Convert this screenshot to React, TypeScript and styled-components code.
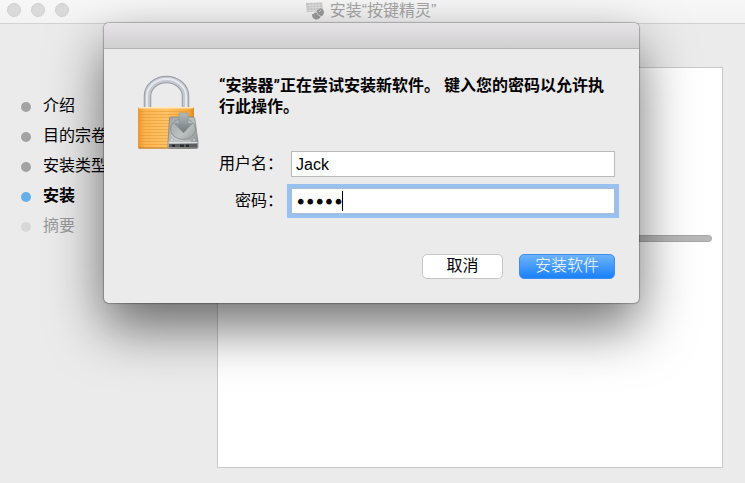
import React, { useState } from "react";
import styled, { createGlobalStyle } from "styled-components";

const GlobalStyle = createGlobalStyle`
  *, *::before, *::after { box-sizing: border-box; }
  body {
    margin: 0;
    background: #ebebeb;
    color: #000;
    font-family: "Liberation Sans", "Noto Sans CJK SC", sans-serif;
    font-size: 16px;
    line-height: 20px;
  }
`;

const Window = styled.div`
  position: relative;
  display: flex;
  flex-direction: column;
  min-height: 100vh;
  overflow: hidden;
`;

const TitleBar = styled.header`
  display: grid;
  grid-template-columns: 1fr auto 1fr;
  align-items: center;
  height: 24px;
  padding: 0 10px 1px 7px;
  background: linear-gradient(#f7f7f7, #f3f3f3);
  border-bottom: 1px solid #d2d2d2;
`;

const Lights = styled.div`
  display: flex;
  gap: 10px;
  padding-bottom: 2px;
`;

const Light = styled.button`
  width: 14px;
  height: 14px;
  padding: 0;
  border: 1px solid #cfcfcf;
  border-radius: 50%;
  background: #dadada;
`;

const Title = styled.h1`
  display: flex;
  align-items: center;
  gap: 6px;
  margin: 0;
  color: #a5a5a5;
  font-size: 16px;
  font-weight: 400;
`;

const Body = styled.div`
  display: flex;
  flex: 1;
  padding: 43px 22px 15px 21px;
`;

const Steps = styled.ol`
  display: flex;
  flex: none;
  flex-direction: column;
  gap: 10px;
  width: 196px;
  margin: 0;
  padding: 29px 0 0;
  list-style: none;
`;

const stepColors = {
  done: { dot: "#a3a3a3", text: "#000" },
  current: { dot: "#65aeea", text: "#000" },
  pending: { dot: "#d8d8d8", text: "#999" },
};

const Step = styled.li<{ $state: keyof typeof stepColors }>`
  display: flex;
  align-items: center;
  gap: 12px;
  height: 20px;
  color: ${(p) => stepColors[p.$state].text};
  font-weight: ${(p) => (p.$state === "current" ? 700 : 400)};

  &::before {
    content: "";
    width: 10px;
    height: 10px;
    margin-top: 2px;
    border-radius: 50%;
    background: ${(p) => stepColors[p.$state].dot};
  }
`;

const Panel = styled.main`
  flex: 1;
  padding: 167px 10px 0;
  border: 1px solid #c9c9c9;
  background: #fff;
`;

const ProgressBar = styled.div`
  height: 7px;
  border: 1px solid #a6a6a6;
  border-radius: 4px;
  background: #b8b8b8;
`;

const SheetLayer = styled.div`
  position: absolute;
  inset: 23px 0 auto;
  display: flex;
  justify-content: center;
  padding-right: 2px;
`;

const Sheet = styled.form`
  width: min(100%, 535px);
  border-radius: 5px;
  background: #ebebeb;
  box-shadow: 0 0 1px 1px rgba(0, 0, 0, 0.25), 0 24px 54px rgba(0, 0, 0, 0.56);
`;

const SheetBar = styled.div`
  height: 26px;
  border-bottom: 1px solid #b4b4b4;
  border-radius: 5px 5px 0 0;
  background: linear-gradient(#e6e3e6, #d0d0d0);
`;

const SheetContent = styled.div`
  display: flex;
  gap: 20px;
  padding: 26px 24px 24px 33px;
`;

const SheetMain = styled.div`
  flex: 1;
`;

const Message = styled.p`
  margin: 0 0 34px;
  font-family: Roboto, "Noto Sans CJK SC", sans-serif;
  font-weight: 700;
  line-height: 21px;
`;

const Fields = styled.div`
  display: grid;
  grid-template-columns: 64px 1fr;
  align-items: center;
  gap: 11px 8px;
`;

const Label = styled.label`
  text-align: right;
  white-space: nowrap;
`;

const FieldBox = styled.div`
  position: relative;
`;

const Field = styled.input`
  display: block;
  width: 100%;
  height: 26px;
  padding: 2px 4px 0;
  border: 1px solid #b9b9b9;
  border-radius: 0;
  outline: none;
  background: #fff;
  color: #000;
  font-family: "Liberation Sans", sans-serif;
  font-size: 16px;
`;

const SecretField = styled(Field)`
  border-color: #a9bdd6;
  box-shadow: 0 0 0 4px #98c1f0;
  font-family: "DejaVu Sans", sans-serif;
  caret-color: transparent;
  -webkit-text-stroke: 1px #000;
`;

const Caret = styled.span`
  position: absolute;
  top: 3px;
  left: 51px;
  width: 1px;
  height: 20px;
  background: #000;
`;

const Actions = styled.div`
  display: flex;
  justify-content: flex-end;
  gap: 16px;
  margin-top: 40px;
`;

const Button = styled.button<{ $primary?: boolean }>`
  width: ${(p) => (p.$primary ? 96 : 81)}px;
  height: 25px;
  padding: 0 0 1px;
  border: 1px solid ${(p) => (p.$primary ? "#3c8ff0" : "#c6c6c6")};
  border-radius: 5px;
  background: ${(p) => (p.$primary ? "linear-gradient(#6cb3fa, #1a80fd)" : "#fff")};
  color: ${(p) => (p.$primary ? "#fff" : "#000")};
  font: inherit;
  font-weight: ${(p) => (p.$primary ? 300 : 400)};
`;

const LockDrawing = styled.svg`
  flex: none;
  width: 62px;
  height: 76px;
`;

function InstallerIcon() {
  return (
    <svg width="18" height="18" viewBox="0 0 18 18" aria-hidden="true">
      <path d="M0 1 16 0.500 17 9 1 10Z" fill="#c6c6c6" />
      <path d="M1 3.500 16 3M1 6 16 5.500M1 8.500 16 8M4 1v9M7 1v9M10 1v9M13 1v9" stroke="#eee" strokeWidth=".6" />
      <path d="M6 12.500 10.500 10 Q11 7 14.500 6.500 Q18 7 18 10.500 Q18 13 15 14.500 Q13 18 9.500 17.500 Q6 16.500 6 12.500Z" fill="#9b9b9b" />
      <path d="M10.500 10q1 3.500 4.500 4.500M13 10l2-2" fill="none" stroke="#ddd" strokeWidth=".9" />
    </svg>
  );
}

function LockIcon() {
  const ridges = [36, 39, 42, 45, 48, 51, 54, 57, 60, 63, 66, 69];
  return (
    <LockDrawing viewBox="0 0 62 76" aria-hidden="true">
      <defs>
        <linearGradient id="brass" x1="0" x2="1" y1="0" y2="0">
          <stop offset="0" stopColor="#e8962c" />
          <stop offset=".12" stopColor="#fbb450" />
          <stop offset=".5" stopColor="#ffc368" />
          <stop offset=".9" stopColor="#f7a83e" />
          <stop offset="1" stopColor="#d98a26" />
        </linearGradient>
        <linearGradient id="drive" x1="0" x2="1" y1="0" y2="1">
          <stop offset="0" stopColor="#9fa4a5" />
          <stop offset=".5" stopColor="#bcc1c2" />
          <stop offset="1" stopColor="#85898a" />
        </linearGradient>
        <linearGradient id="arrow" x1="0" x2="0" y1="0" y2="1">
          <stop offset="0" stopColor="#b4babc" />
          <stop offset="1" stopColor="#71797c" />
        </linearGradient>
      </defs>
      <path d="M10.500 33V21a19 16.500 0 0 1 38 0v12" fill="none" stroke="#989ca5" strokeWidth="7.500" />
      <path d="M10.500 33V21a19 16.500 0 0 1 38 0v12" fill="none" stroke="#c4c8cf" strokeWidth="5.500" />
      <path d="M10 33V21a19.500 17 0 0 1 39 0v12" fill="none" stroke="#e6e9ee" strokeWidth="2" />
      <rect x="1" y="32" width="56" height="41.500" rx="1.500" fill="url(#brass)" />
      <path d="M2 32.700h54" stroke="#ffe9bd" strokeWidth="1.400" />
      {ridges.map((y) => (
        <path key={y} d={`M2 ${y}.500h54`} stroke="#e99a32" strokeWidth=".9" opacity=".65" />
      ))}
      <path d="M1.500 73h55" stroke="#b8731f" strokeWidth="1" />
      <path d="M34 42h22q1.500 0 1.800 1.500L61 67v5q0 1.500-1.500 1.500h-27Q31 73.500 31 72v-5l1.500-23.500q.2-1.500 1.500-1.500Z" fill="url(#drive)" stroke="#7c8081" strokeWidth=".7" />
      <ellipse cx="46" cy="54" rx="12.500" ry="10.500" fill="none" stroke="#8b9091" strokeWidth=".9" />
      <path d="M34 60q5 7 20 6" fill="none" stroke="#d5d9da" strokeWidth=".8" />
      <path d="M31.500 67.500h29" stroke="#dfe2e2" strokeWidth="1" />
      <path d="M32 69h28v3.500H32Z" fill="#5a5e60" />
      <path d="M35 70.800h3M43 70.800h4M49 70.800h3" stroke="#222" strokeWidth="2" />
      <circle cx="35" cy="65" r=".8" fill="#eee" />
      <circle cx="57" cy="65" r=".8" fill="#eee" />
      <path d="M42 38h9v10.500h4.500L46.500 58 37.500 48.500H42Z" fill="url(#arrow)" stroke="#8d9496" strokeWidth=".6" />
    </LockDrawing>
  );
}

const steps: { name: string; state: keyof typeof stepColors }[] = [
  { name: "介绍", state: "done" },
  { name: "目的宗卷", state: "done" },
  { name: "安装类型", state: "done" },
  { name: "安装", state: "current" },
  { name: "摘要", state: "pending" },
];

export default function App() {
  const [user, setUser] = useState("Jack");
  const [password, setPassword] = useState("12345");

  return (
    <>
      <GlobalStyle />
      <Window>
        <TitleBar>
          <Lights>
            <Light type="button" aria-label="关闭" />
            <Light type="button" aria-label="最小化" />
            <Light type="button" aria-label="缩放" />
          </Lights>
          <Title>
            <InstallerIcon />
            安装“按键精灵”
          </Title>
        </TitleBar>
        <Body>
          <Steps>
            {steps.map((s) => (
              <Step key={s.name} $state={s.state}>
                {s.name}
              </Step>
            ))}
          </Steps>
          <Panel>
            <ProgressBar role="progressbar" aria-label="安装进度" />
          </Panel>
        </Body>
        <SheetLayer>
          <Sheet role="dialog" aria-labelledby="message" onSubmit={(e) => e.preventDefault()}>
            <SheetBar />
            <SheetContent>
              <LockIcon />
              <SheetMain>
                <Message id="message">“安装器”正在尝试安装新软件。 键入您的密码以允许执行此操作。</Message>
                <Fields>
                  <Label htmlFor="user">用户名：</Label>
                  <FieldBox>
                    <Field id="user" value={user} onChange={(e) => setUser(e.target.value)} />
                  </FieldBox>
                  <Label htmlFor="password">密码：</Label>
                  <FieldBox>
                    <SecretField
                      id="password"
                      type="password"
                      value={password}
                      onChange={(e) => setPassword(e.target.value)}
                    />
                    <Caret />
                  </FieldBox>
                </Fields>
                <Actions>
                  <Button type="button">取消</Button>
                  <Button type="submit" $primary>
                    安装软件
                  </Button>
                </Actions>
              </SheetMain>
            </SheetContent>
          </Sheet>
        </SheetLayer>
      </Window>
    </>
  );
}
